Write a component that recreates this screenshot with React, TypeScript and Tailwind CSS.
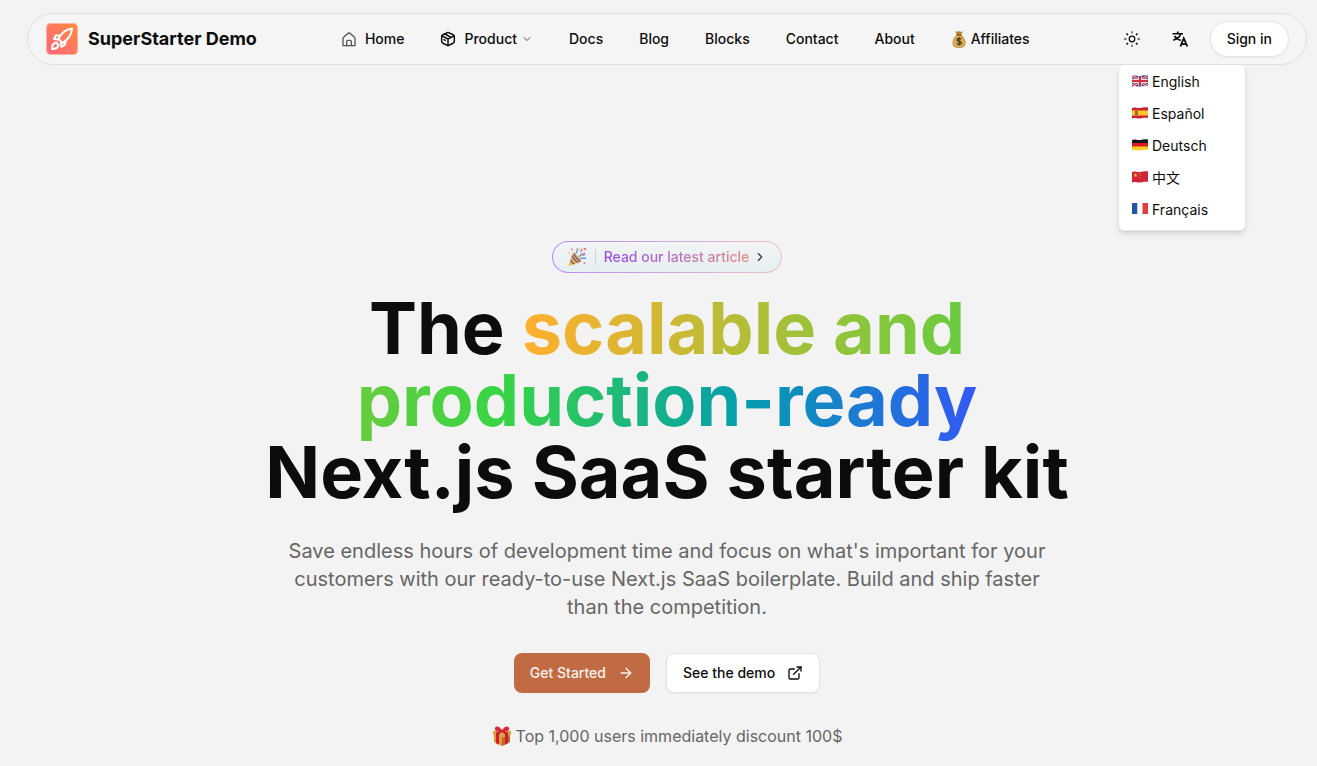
import React from "react";
import { ArrowRight, ChevronDown, ChevronRight, ExternalLink } from "lucide-react";

const HomeIcon = () => (
  <svg aria-hidden="true" viewBox="0 0 24 24" fill="none" stroke="currentColor" strokeWidth="2" strokeLinejoin="round" strokeLinecap="round" className="size-4 text-[#555]">
    <path d="M3 11.500a3 3 0 0 1 1.200-2.400l6-5.500a3 3 0 0 1 3.600 0l6 5.500A3 3 0 0 1 21 11.500V22H3z" />
    <path d="M8.500 22v-6a2 2 0 0 1 2-2h3a2 2 0 0 1 2 2v6" />
  </svg>
);

const BoxIcon = () => (
  <svg aria-hidden="true" viewBox="0 0 24 24" fill="none" stroke="currentColor" strokeWidth="2.200" strokeLinejoin="round" strokeLinecap="round" className="size-4">
    <path d="M12 2l7 3.300c2 .9 2.500 1.700 2.500 3.200v7c0 1.500-.5 2.300-2.500 3.200L12 22l-7-3.300c-2-.9-2.500-1.700-2.500-3.200v-7c0-1.500.5-2.300 2.500-3.200z" />
    <path d="M3 7.200l9 4.800 9-4.800M12 12v10M7.500 4.500l9 5M6 13l2 1" />
  </svg>
);

const SunIcon = () => (
  <svg aria-hidden="true" viewBox="0 0 24 24" fill="none" stroke="currentColor" strokeWidth="1.700" className="size-[18px]">
    <circle cx="12" cy="12" r="3.700" />
    <path d="M12 1.500v3M12 19.500v3M1.500 12h3M19.500 12h3" strokeOpacity=".75" />
    <path d="M4.700 4.700l2 2M17.300 17.300l2 2M4.700 19.300l2-2M17.300 6.700l2-2" strokeWidth="2" />
  </svg>
);

const TranslateIcon = () => (
  <svg aria-hidden="true" viewBox="0 0 24 24" fill="none" stroke="currentColor" strokeWidth="2.200" className="size-[18px]">
    <path d="M2 5h14M9 2v3M4.500 8c1.800 3 4.500 4.800 8.500 6M13 5c-1 4-4.500 7-10 8.500" />
    <path d="M12.500 22l4.500-11 4.800 11M14.200 18.700h6" strokeWidth="2.400" />
  </svg>
);

const Logo = () => (
  <svg aria-hidden="true" viewBox="0 0 32 32" className="size-8">
    <defs>
      <linearGradient id="logo" x1="0" y1="1" x2="1" y2="0">
        <stop stopColor="#ff6682" />
        <stop offset="1" stopColor="#ff8a3d" />
      </linearGradient>
    </defs>
    <rect x=".5" y=".5" width="31" height="31" rx="4" fill="url(#logo)" stroke="#ffb29b" />
    <g fill="none" stroke="#fff" strokeWidth="2.100" strokeLinejoin="round" strokeLinecap="round">
      <path d="M12.500 16C15 10.500 19 6.500 26 5.500c-.5 6.500-3.500 11-9.500 14.500z" />
      <path d="M14 12.500H9.800L8 16l4.500.5M19.500 17.500l-.5 4-3.500 2.500-.5-4.500" />
      <path d="M10.500 19.500c-3.500.5-4.500 3-4.500 6.500 3.500 0 6-1 6.500-4z" />
    </g>
  </svg>
);

const MoneyBag = () => (
  <svg aria-hidden="true" viewBox="0 0 16 18" className="h-[18px] w-4">
    <path d="M4 1l2 1 2-1 2 1 2-1-2 4H6z" fill="#b98532" />
    <path d="M6 5h4c3 2 4.500 6 4 9.500-.5 2.500-3 3-6 3s-5.500-.5-6-3C1.500 11 3 7 6 5z" fill="#dcae4d" stroke="#a1742d" strokeWidth=".6" />
    <path d="M5.500 5h5" stroke="#7c5420" strokeWidth="1.200" />
    <path d="M10.300 9.200C9.500 8.100 6 8 6 9.900c0 1.900 4.500 1 4.500 3s-3.800 2-4.700.6M8.100 7.300v8.200" stroke="#3b3427" strokeWidth="1.200" fill="none" />
  </svg>
);

const Popper = () => (
  <svg aria-hidden="true" viewBox="0 0 20 20" className="size-5">
    <path d="M6 5.500c2 .5 7 5 8.500 9L1.500 19z" fill="#f0b62d" />
    <path d="M5 8.500c1 3 3.500 5.500 6.500 7.200M3.500 13c.8 2 2 3.200 4 4.200M7 6.500c1 3.500 3.500 6 6.500 8" stroke="#7651ad" strokeWidth="1.300" fill="none" />
    <path d="M8.500 6.500c2-1.500 2.500-3 1.500-5M12 10c2-4 3.500-2 6-4" stroke="#5b9ad9" strokeWidth="1.400" fill="none" />
    <path d="M13 12c2-2 4 0 6-1" stroke="#5b9ad9" strokeWidth="1.400" fill="none" />
    <path d="M13.500 5c1.500-.5.5-2 2-3M15 8.500l3-1" stroke="#e67986" strokeWidth="1.400" fill="none" />
    <g fill="#e67986"><circle cx="5" cy="2.500" r="1" /><circle cx="18" cy="2" r="1.300" /><circle cx="17.500" cy="16" r="1" /></g>
    <g fill="#eab646"><circle cx="13" cy="2" r=".8" /><circle cx="2" cy="6" r=".8" /></g>
  </svg>
);

const Gift = () => (
  <svg aria-hidden="true" viewBox="0 0 20 20" className="size-5">
    <path d="M2 7l8 3 8-3v9l-8 4-8-4z" fill="#e39a34" />
    <path d="M10 10l8-3v9l-8 4z" fill="#bd6c20" />
    <path d="M1 5l9-2 9 2v3.500L10 12 1 8.500z" fill="#dca04a" />
    <path d="M4 6l3 1v11.700l-3-1.500zM13 7l3-1v11.200l-3 1.500z" fill="#cc2031" />
    <path d="M10 5C8 0 4-.5 3 2s3 4 7 4c4 0 8-1.500 7-4s-5-2-7 3z" fill="#e32639" />
    <path d="M9.500 5L5 8.500M10.500 5L15 8.500" stroke="#c31930" strokeWidth="2" />
  </svg>
);

const Flag = ({ code }: { code: string }) => (
  <svg aria-hidden="true" viewBox="0 0 18 16" className="h-4 w-[18px]">
    <defs>
      <clipPath id={"flag-" + code}>
        <path d={code === "fr" ? "M1 1h16v11H1z" : "M1 2c3-1.500 5 .5 8 0s5-1 8-.5V12c-3-.5-5 0-8 .5s-5-1.500-8 0z"} />
      </clipPath>
    </defs>
    <g clipPath={"url(#flag-" + code + ")"}>
      {code === "gb" && (
        <>
          <path d="M0 0h18v14H0z" fill="#283f87" />
          <path d="M0 1l18 12M0 13L18 1" stroke="#fff" strokeWidth="2.600" />
          <path d="M0 1l18 12M0 13L18 1" stroke="#d52b3e" strokeWidth="1.200" />
          <path d="M9 0v14M0 7h18" stroke="#fff" strokeWidth="3.400" />
          <path d="M9 0v14M0 7h18" stroke="#d52b3e" strokeWidth="2.200" />
        </>
      )}
      {code === "es" && (
        <>
          <path d="M0 0h18v14H0z" fill="#c9232d" />
          <path d="M0 4.500h18v5H0z" fill="#f5c52c" />
          <path d="M4 5h3v4H4z" fill="#a86534" />
        </>
      )}
      {code === "de" && (
        <>
          <path d="M0 0h18v5H0z" fill="#171717" />
          <path d="M0 5h18v4H0z" fill="#dc1c20" />
          <path d="M0 8.500h18V14H0z" fill="#f8cd28" />
        </>
      )}
      {code === "cn" && (
        <>
          <path d="M0 0h18v14H0z" fill="#cf2637" />
          <path d="M4.500 3l.6 1.400 1.500.1-1.200 1 .4 1.500-1.300-.8-1.300.8.400-1.500-1.200-1 1.500-.1z" fill="#f4c344" />
          <path d="M8 3.500h1M9 5.500h1M8 7.500h1" stroke="#f4c344" strokeWidth=".8" />
        </>
      )}
      {code === "fr" && (
        <>
          <path d="M0 0h6.500v14H0z" fill="#2056a5" />
          <path d="M6.500 0h5v14h-5z" fill="#fff" />
          <path d="M11.500 0H18v14h-6.500z" fill="#e33d40" />
        </>
      )}
    </g>
  </svg>
);

const links = ["Docs", "Blog", "Blocks", "Contact", "About"];
const languages = [
  ["gb", "English"],
  ["es", "Español"],
  ["de", "Deutsch"],
  ["cn", "中文"],
  ["fr", "Français"],
];

export default function App() {
  return (
    <div className="min-h-screen bg-[#f3f3f3] pt-[13px] pl-[17px] font-['Inter','Noto_Sans_CJK_SC',sans-serif] text-[#0c0c0c]">
      <header className="relative mx-auto flex h-[52px] max-w-7xl items-center justify-between rounded-full border border-[#e0e0e0] bg-[#f5f5f5] pr-[17px] pl-[18px]">
        <a href="#" className="flex items-center gap-2.5 text-lg font-bold">
          <Logo />
          SuperStarter Demo
        </a>
        <nav className="flex items-center gap-9 pl-1.5 text-sm font-medium">
          <a href="#" className="flex items-center gap-2"><HomeIcon />Home</a>
          <button type="button" className="flex items-center gap-2">
            <BoxIcon />
            <span className="flex items-center gap-1">Product<ChevronDown className="size-3 text-[#555]" /></span>
          </button>
          {links.map((link) => <a href="#" key={link}>{link}</a>)}
          <a href="#" className="flex items-center gap-1"><MoneyBag />Affiliates</a>
        </nav>
        <div className="flex items-center">
          <button type="button" aria-label="Toggle theme" className="flex size-12 items-center justify-center"><SunIcon /></button>
          <button type="button" aria-label="Change language" className="mr-1.5 flex size-12 items-center justify-center"><TranslateIcon /></button>
          <button type="button" className="h-9 rounded-full border border-[#e5e5e5] bg-white px-4 text-sm font-medium shadow-xs">Sign in</button>
        </div>
        <div role="menu" className="absolute top-[51px] right-[60px] w-32 rounded-md border border-t-0 border-[#e5e5e5] bg-white px-1 pt-px pb-1 text-sm shadow-md">
          {languages.map(([code, name]) => (
            <button type="button" role="menuitem" key={code} className="flex h-8 w-full items-center gap-[3px] px-2">
              <Flag code={code} />{name}
            </button>
          ))}
        </div>
      </header>

      <main className="flex flex-col items-center pt-44 text-center">
        <a href="#" className="rounded-full bg-linear-to-r from-[#b78bf5] to-[#ecc0c5] p-px">
          <span className="flex h-[30px] items-center rounded-full bg-linear-to-b from-[#f3f4f5] to-[#e5eff2] px-[14px] text-sm font-medium">
            <Popper />
            <span className="mx-2 h-4 w-px bg-[#ccd3d8]" />
            <span className="bg-linear-to-r from-[#9945ea] to-[#df8a82] bg-clip-text text-transparent">Read our latest article</span>
            <ChevronRight className="ml-1 size-3.5 text-[#333]" />
          </span>
        </a>
        <h1 className="mt-[19px] text-7xl leading-[72px] font-bold">
          The{" "}
          <span className="bg-[linear-gradient(90deg,#ffaf2f,#38d544_55%,#049eae_78%,#3358f5)] bg-clip-text text-transparent">
            scalable and
            <br />
            production-ready
          </span>
          <br />
          Next.js SaaS starter kit
        </h1>
        <p className="mt-[29px] max-w-[768px] text-xl leading-7 text-[#666]">
          Save endless hours of development time and focus on what's important for your customers with our ready-to-use Next.js SaaS boilerplate. Build and ship faster than the competition.
        </p>
        <div className="mt-8 flex gap-4 text-sm font-medium">
          <a href="#" className="flex h-10 items-center gap-3 rounded-lg bg-[#c16b45] px-4 text-[#fbf1ed]">Get Started<ArrowRight className="size-4" /></a>
          <a href="#" className="flex h-10 items-center gap-3 rounded-lg border border-[#e2e2e2] bg-white px-4 shadow-xs">See the demo<ExternalLink className="size-4" /></a>
        </div>
        <p className="mt-[31px] flex items-center gap-1 text-base leading-6 text-[#666]"><Gift />Top 1,000 users immediately discount 100$</p>
      </main>
    </div>
  );
}
